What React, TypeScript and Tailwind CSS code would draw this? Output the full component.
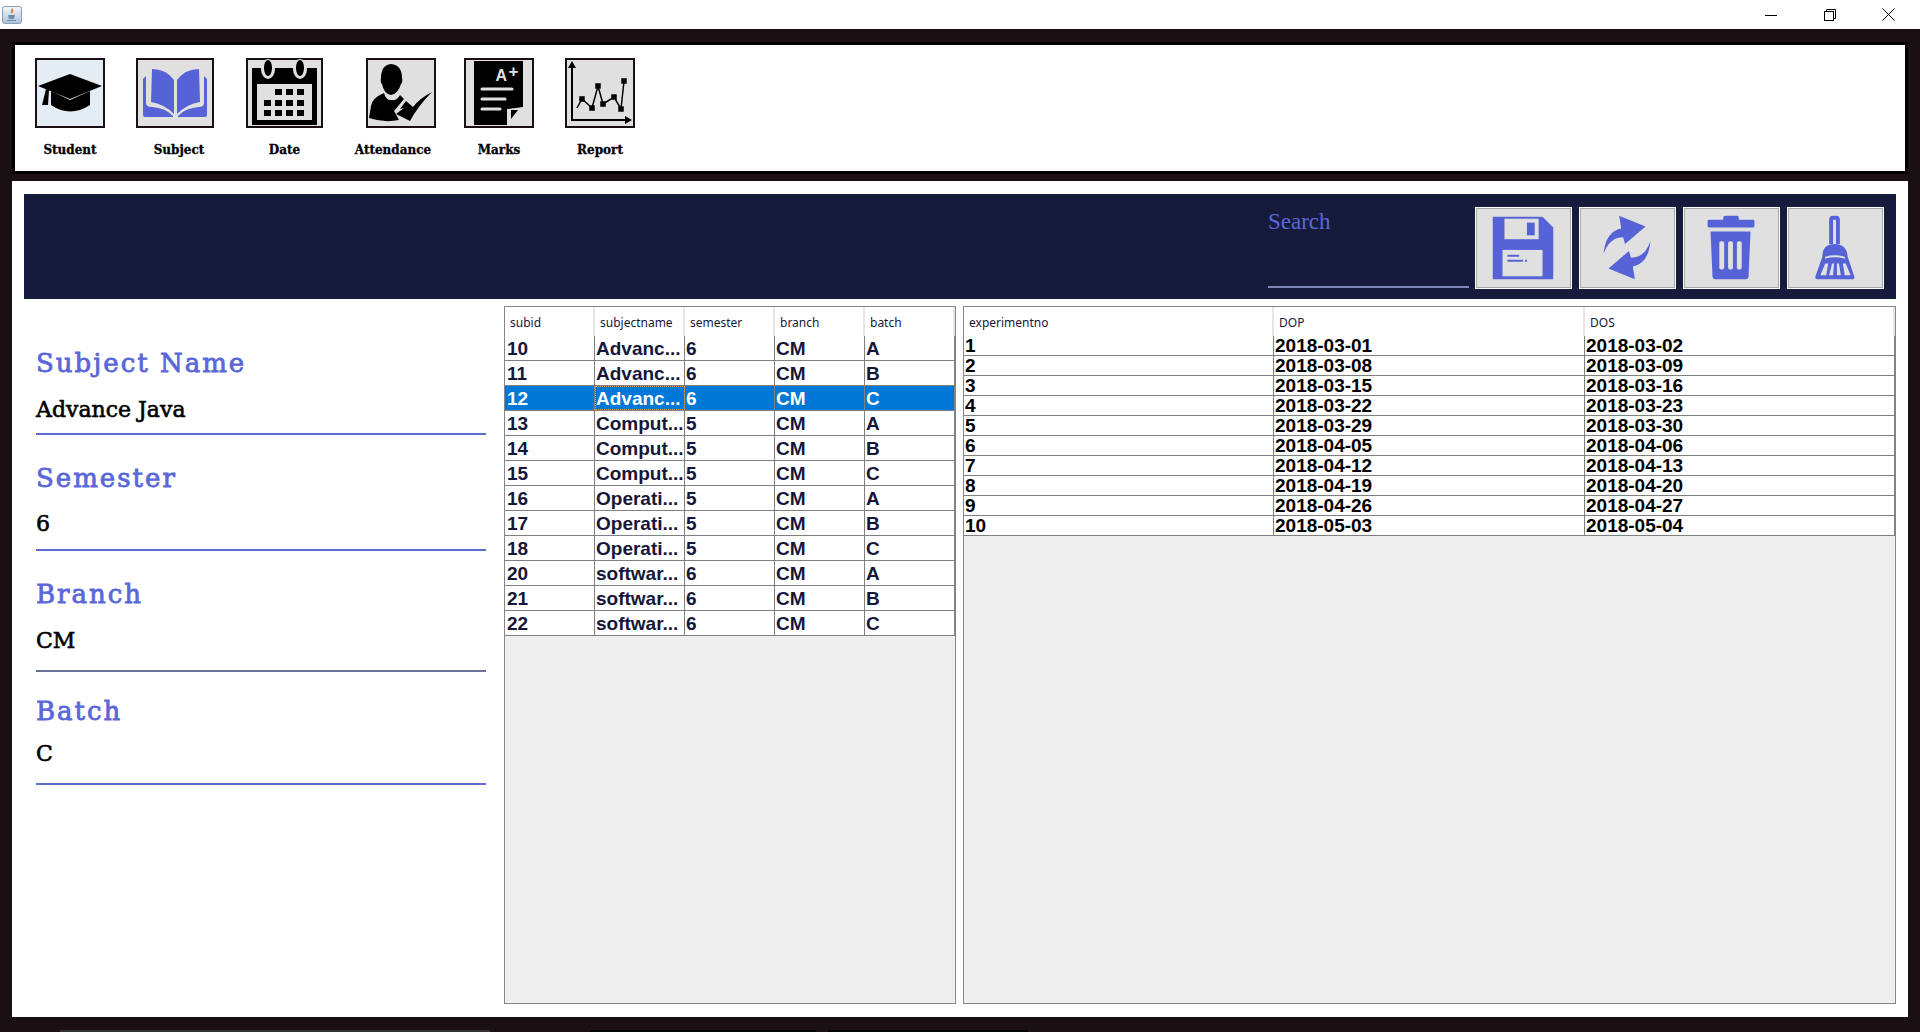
import React from 'react';

const BLUE = '#5663d6';
const GRAY = '#e0e0e0';

const subjects = [
  ['10', 'Advanc...', '6', 'CM', 'A'],
  ['11', 'Advanc...', '6', 'CM', 'B'],
  ['12', 'Advanc...', '6', 'CM', 'C'],
  ['13', 'Comput...', '5', 'CM', 'A'],
  ['14', 'Comput...', '5', 'CM', 'B'],
  ['15', 'Comput...', '5', 'CM', 'C'],
  ['16', 'Operati...', '5', 'CM', 'A'],
  ['17', 'Operati...', '5', 'CM', 'B'],
  ['18', 'Operati...', '5', 'CM', 'C'],
  ['20', 'softwar...', '6', 'CM', 'A'],
  ['21', 'softwar...', '6', 'CM', 'B'],
  ['22', 'softwar...', '6', 'CM', 'C'],
];

const experiments = [
  ['1', '2018-03-01', '2018-03-02'],
  ['2', '2018-03-08', '2018-03-09'],
  ['3', '2018-03-15', '2018-03-16'],
  ['4', '2018-03-22', '2018-03-23'],
  ['5', '2018-03-29', '2018-03-30'],
  ['6', '2018-04-05', '2018-04-06'],
  ['7', '2018-04-12', '2018-04-13'],
  ['8', '2018-04-19', '2018-04-20'],
  ['9', '2018-04-26', '2018-04-27'],
  ['10', '2018-05-03', '2018-05-04'],
];

const StudentIcon = () => (
  <svg viewBox="0 0 70 70" className="block w-[70px] h-[70px]">
    <path d="M35 16 L67 28 L35 41 L3 28 Z" fill="#000" />
    <path d="M16 33 L35 42 L55 33 L55 47 Q35 60 16 47 Z" fill="#000" />
    <path d="M11 31 L14 32 L13 47 L7 47 Z" fill="#000" />
  </svg>
);

const BookIcon = () => (
  <svg viewBox="0 0 78 70" className="block w-[78px] h-[70px]" fill={BLUE}>
    <path d="M16 11 Q30 11 38 22 L38 56 Q28 46 15 44 Z" />
    <path d="M63 11 Q49 11 41 22 L41 56 Q51 46 64 44 Z" />
    <path d="M7 21 L10 18 L10 45 Q10 49 16 49 Q30 50 37 58 L37 59 L9 59 Q7 59 7 57 Z" />
    <path d="M71 21 L68 18 L68 45 Q68 49 63 49 Q49 50 42 58 L42 59 L69 59 Q71 59 71 57 Z" />
  </svg>
);

const DateIcon = () => {
  const cells = [
    [29, 31], [40, 31], [51, 31],
    [18, 42], [29, 42], [40, 42], [51, 42],
    [18, 52], [29, 52], [40, 52], [51, 52],
  ];
  return (
    <svg viewBox="0 0 77 70" className="block w-[77px] h-[70px]">
      <rect x="6" y="10" width="65" height="57" fill="#000" />
      <ellipse cx="22" cy="11" rx="7" ry="10" fill={GRAY} />
      <ellipse cx="22" cy="10" rx="4" ry="8" fill="#000" />
      <ellipse cx="54" cy="11" rx="7" ry="10" fill={GRAY} />
      <ellipse cx="54" cy="10" rx="4" ry="8" fill="#000" />
      <rect x="11" y="26" width="55" height="36" fill={GRAY} />
      {cells.map(([x, y]) => (
        <rect key={`${x}-${y}`} x={x} y={y} width="7" height="6" fill="#000" />
      ))}
    </svg>
  );
};

const AttendanceIcon = () => (
  <svg viewBox="0 0 70 70" className="block w-[70px] h-[70px]" fill="#000">
    <path d="M25 6 Q36 7 36 20 Q37 24 35 26 Q32 36 25 37 Q18 36 16 26 Q14 24 15 20 Q15 7 25 6 Z" />
    <path d="M18 35 Q20 43 26 42 Q31 43 34 37 L38 41 L28 53 L33 62 Q18 65 3 60 L5 48 Q6 40 18 35 Z" />
    <path d="M40 43 L47 49 Q54 40 66 34 Q52 48 44 63 L30 56 L38 50 L34 51 Z" />
  </svg>
);

const MarksIcon = () => (
  <svg viewBox="0 0 70 70" className="block w-[70px] h-[70px]">
    <path d="M10 3 L59 3 L59 49 L43 51 L43 67 L10 67 Z" fill="#000" />
    <text x="31.5" y="23" fontFamily="Liberation Sans, sans-serif" fontWeight="700" fontSize="16" fill={GRAY}>A</text>
    <text x="44.5" y="19" fontFamily="Liberation Sans, sans-serif" fontWeight="700" fontSize="17" fill={GRAY}>+</text>
    <path d="M18 31 H48 M18 41 H41 M18 51 H36" stroke={GRAY} strokeWidth="3" strokeLinecap="round" />
    <path d="M47 52 H54 L47 61 Z" fill="#000" />
  </svg>
);

const ReportIcon = () => {
  const pts = [[17, 41], [27, 50], [33, 28], [38, 46], [49, 39], [56, 51], [59, 23]];
  return (
    <svg viewBox="0 0 70 70" className="block w-[70px] h-[70px]">
      <path d="M7 8 V62 H63" fill="none" stroke="#000" strokeWidth="2" />
      <path d="M7 3 L3 10 H11 Z M67 62 L60 58 V66 Z" fill="#000" />
      <polyline points={`12,50 ${pts.map((p) => p.join(',')).join(' ')}`} fill="none" stroke="#000" strokeWidth="1.5" />
      {pts.map(([x, y]) => (
        <rect key={x} x={x - 2.75} y={y - 2.75} width="5.5" height="5.5" fill="#000" />
      ))}
    </svg>
  );
};

const FloppyIcon = () => (
  <svg viewBox="0 0 97 82" className="block w-full h-full">
    <path d="M17 9 H68 L79 20 V73 H17 Z" fill={BLUE} />
    <rect x="29" y="11" width="35" height="21" fill={GRAY} />
    <rect x="52" y="15" width="8" height="13" fill={BLUE} />
    <rect x="27" y="43" width="41" height="27" fill={GRAY} />
    <path d="M32 49 H44 M32 54 H48 M50 54 H52" stroke={BLUE} strokeWidth="2" />
  </svg>
);

const SyncIcon = () => {
  const arrow = 'M24 47 Q26 24 42 21 L40 8 L67 19 L46 37 L44 30 Q30 30 24 47 Z';
  return (
    <svg viewBox="0 0 97 82" className="block w-full h-full" fill={BLUE}>
      <path d={arrow} />
      <path d={arrow} transform="rotate(180 48 40.5)" />
    </svg>
  );
};

const TrashIcon = () => (
  <svg viewBox="0 0 97 82" className="block w-full h-full">
    <rect x="40" y="8" width="16" height="6" rx="2" fill={BLUE} />
    <rect x="24" y="12" width="48" height="8" rx="1.5" fill={BLUE} />
    <path d="M27 24 H68 L66 70 Q66 73 63 73 H32 Q29 73 29 70 Z" fill={BLUE} />
    <rect x="36" y="34" width="5" height="29" rx="2" fill={GRAY} />
    <rect x="45" y="34" width="5" height="29" rx="2" fill={GRAY} />
    <rect x="54" y="34" width="5" height="29" rx="2" fill={GRAY} />
  </svg>
);

const BroomIcon = () => (
  <svg viewBox="0 0 97 82" className="block w-full h-full">
    <path d="M44 37 V12 Q44 10 46 10 H49 Q51 10 51 12 V37" fill="none" stroke={BLUE} strokeWidth="4" />
    <path d="M35 50 Q35 37 47.5 37 Q60 37 61 50 L68 71 Q68 73 66 73 H30 Q27 73 28 70 Z" fill={BLUE} />
    <path d="M38 50 Q47.5 47 58 50 L58.5 52 Q47.5 49 37.5 52 Z" fill={GRAY} />
    <path d="M38 57 L41 57 L39 69 L33 69 Z M45 57 L47 57 L46 69 L42 69 Z M50 57 L52 57 L54 69 L50 69 Z M56 57 L59 57 L64 69 L58 69 Z" fill={GRAY} />
  </svg>
);

const ToolbarItem = ({ label, className, tileClass, children }: { label: string; className: string; tileClass: string; children: React.ReactNode }) => (
  <div className={`flex flex-col items-center ${className}`}>
    <div className={`ring-2 ring-inset ring-[#1a1014] ${tileClass}`}>{children}</div>
    <span className="mt-[14px] text-[12px] leading-[16px] font-bold text-black whitespace-nowrap [-webkit-text-stroke:0.3px_black] font-['DejaVu_Serif',serif]">{label}</span>
  </div>
);

const ActionButton = ({ children }: { children: React.ReactNode }) => (
  <button className="w-[97px] h-[82px] bg-[#e0e0e0] border border-white shadow-[inset_0_0_0_1px_#a8a8a8]">{children}</button>
);

const Field = ({ label, value, wrap, gap, pad, line }: { label: string; value: string; wrap: string; gap: string; pad: string; line: string }) => (
  <div className={`w-[450px] border-b-2 ${line} ${wrap} ${pad}`}>
    <div className={`h-[30px] leading-[30px] text-[26px] tracking-[2px] text-[#5a67d8] [-webkit-text-stroke:0.8px_#5a67d8] font-['DejaVu_Serif',serif] ${gap}`}>{label}</div>
    <div className="h-[28px] leading-[28px] text-[22px] text-black [-webkit-text-stroke:0.6px_black] font-['DejaVu_Serif',serif]">{value}</div>
  </div>
);

const HeaderCell = ({ label, className }: { label: string; className: string }) => (
  <div className={`pl-[5px] border-r-2 border-[#e6e6e6] text-[12px] leading-[31px] text-[#16163a] font-['Noto_Sans',sans-serif] ${className}`}>{label}</div>
);

export default function App() {
  return (
    <div className="w-[1920px] h-[1032px] overflow-hidden bg-[#1a1014] flex flex-col font-['Liberation_Sans',sans-serif]">
      {/* title bar */}
      <div className="h-[29px] bg-white flex items-center justify-between pr-[2px]">
        <svg viewBox="0 0 20 18" className="ml-[2px] w-[20px] h-[18px]">
          <defs>
            <linearGradient id="jv" x1="0" y1="0" x2="0" y2="1">
              <stop offset="0" stopColor="#f4f8fc" />
              <stop offset="1" stopColor="#a9c0d8" />
            </linearGradient>
          </defs>
          <rect x="0.5" y="0.5" width="19" height="17" rx="2" fill="url(#jv)" stroke="#8aa0b8" />
          <path d="M10 2 Q12.5 5 9.5 8 Q8 5 10 2 Z" fill="#e2762a" />
          <path d="M6 9 H13 L12 13 H7 Z" fill="#6f8daa" />
          <path d="M5 14.5 H14" stroke="#6f8daa" />
        </svg>
        <div className="flex">
          <div className="w-[59px] h-[29px] flex items-center justify-center">
            <svg viewBox="0 0 12 12" className="w-[12px] h-[12px]"><path d="M0 6.5 H12" stroke="#000" /></svg>
          </div>
          <div className="w-[59px] h-[29px] flex items-center justify-center">
            <svg viewBox="0 0 12 12" className="w-[12px] h-[12px]" fill="none" stroke="#000"><path d="M2.5 2.5 V0.5 H11.5 V9.5 H9.5" /><rect x="0.5" y="2.5" width="9" height="9" /></svg>
          </div>
          <div className="w-[59px] h-[29px] flex items-center justify-center">
            <svg viewBox="0 0 13 13" className="w-[13px] h-[13px]"><path d="M0.5 0.5 L12.5 12.5 M12.5 0.5 L0.5 12.5" stroke="#000" /></svg>
          </div>
        </div>
      </div>

      {/* toolbar */}
      <div className="mt-[13px] ml-[12px] w-[1896px] h-[132px] bg-white border-[3px] border-black pl-[20px] pt-[13px] flex">
        <ToolbarItem label="Student" className="w-[70px]" tileClass="bg-[#e4ecf4] w-[70px] h-[70px]"><StudentIcon /></ToolbarItem>
        <ToolbarItem label="Subject" className="w-[86px] ml-[31px]" tileClass="bg-[#e0e0e0] w-[78px] h-[70px] mr-[8px]"><BookIcon /></ToolbarItem>
        <ToolbarItem label="Date" className="w-[77px] ml-[24px]" tileClass="bg-[#e0e0e0] w-[77px] h-[70px]"><DateIcon /></ToolbarItem>
        <ToolbarItem label="Attendance" className="w-[86px] ml-[27px]" tileClass="bg-[#e0e0e0] w-[70px] h-[70px] ml-[16px]"><AttendanceIcon /></ToolbarItem>
        <ToolbarItem label="Marks" className="w-[70px] ml-[28px]" tileClass="bg-[#e0e0e0] w-[70px] h-[70px]"><MarksIcon /></ToolbarItem>
        <ToolbarItem label="Report" className="w-[70px] ml-[31px]" tileClass="bg-[#e0e0e0] w-[70px] h-[70px]"><ReportIcon /></ToolbarItem>
      </div>

      {/* main panel */}
      <div className="mt-[7px] ml-[12px] w-[1896px] h-[836px] bg-white px-[12px] pt-[13px]">
        <div className="h-[105px] bg-[#171b3b] flex justify-end pt-[13px] pr-[12px]">
          <div className="w-[201px] h-[81px] mr-[6px] border-b-2 border-[#8088b8]">
            <div className="text-[23px] leading-[30px] text-[#5a67d8] font-['Liberation_Serif',serif]">Search</div>
          </div>
          <div className="flex gap-[7px]">
            <ActionButton><FloppyIcon /></ActionButton>
            <ActionButton><SyncIcon /></ActionButton>
            <ActionButton><TrashIcon /></ActionButton>
            <ActionButton><BroomIcon /></ActionButton>
          </div>
        </div>

        <div className="mt-[7px] flex h-[698px]">
          {/* form */}
          <div className="w-[480px] pl-[12px] pt-[42px]">
            <Field label="Subject Name" value="Advance Java" wrap="" gap="mb-[18px]" pad="pb-[9px]" line="border-[#5f6bd0]" />
            <Field label="Semester" value="6" wrap="mt-[28px]" gap="mb-[17px]" pad="pb-[11px]" line="border-[#5f6bd0]" />
            <Field label="Branch" value="CM" wrap="mt-[28px]" gap="mb-[18px]" pad="pb-[15px]" line="border-[#6b7099]" />
            <Field label="Batch" value="C" wrap="mt-[24px]" gap="mb-[14px]" pad="pb-[15px]" line="border-[#5f6bd0]" />
          </div>

          {/* subjects table */}
          <div className="w-[452px] border border-[#85858c] bg-[#efefef]">
            <div className="flex h-[29px] bg-white">
              {['subid', 'subjectname', 'semester', 'branch', 'batch'].map((h) => (
                <HeaderCell key={h} label={h} className="w-[90px]" />
              ))}
            </div>
            {subjects.map((row, i) => (
              <div key={row[0]} className={`flex h-[25px] border-b border-[#808080] ${i === 2 ? 'bg-[#0078d7] text-white' : 'bg-white text-[#16163a]'}`}>
                {row.map((cell, j) => (
                  <div key={j} className={`w-[90px] border-r border-[#808080] text-[19px] leading-[26px] font-bold whitespace-nowrap overflow-hidden ${j === 0 ? 'pl-[2px]' : 'pl-[1px]'} ${i === 2 && j === 1 ? 'outline-1 outline-dotted -outline-offset-1 outline-[#e8a040]' : ''}`}>
                    {cell}
                  </div>
                ))}
              </div>
            ))}
          </div>

          {/* experiments table */}
          <div className="ml-[7px] w-[933px] border border-[#85858c] bg-[#efefef]">
            <div className="flex h-[29px] bg-white">
              <HeaderCell label="experimentno" className="w-[310px]" />
              <HeaderCell label="DOP" className="w-[311px]" />
              <HeaderCell label="DOS" className="flex-1" />
            </div>
            {experiments.map((row) => (
              <div key={row[0]} className="flex h-[20px] border-b border-[#808080] bg-white text-black">
                {row.map((cell, j) => (
                  <div key={j} className={`pl-[1px] border-r border-[#808080] text-[19px] leading-[19px] font-bold ${j === 0 ? 'w-[310px]' : j === 1 ? 'w-[311px]' : 'flex-1'}`}>
                    {cell}
                  </div>
                ))}
              </div>
            ))}
          </div>
        </div>
      </div>

      {/* sliver of the taskbar behind the window */}
      <div className="mt-[13px] h-[2px] flex">
        <div className="ml-[60px] w-[430px] bg-[#333333]" />
        <div className="ml-[100px] w-[226px] bg-black" />
        <div className="ml-[12px] w-[200px] bg-black" />
      </div>
    </div>
  );
}
